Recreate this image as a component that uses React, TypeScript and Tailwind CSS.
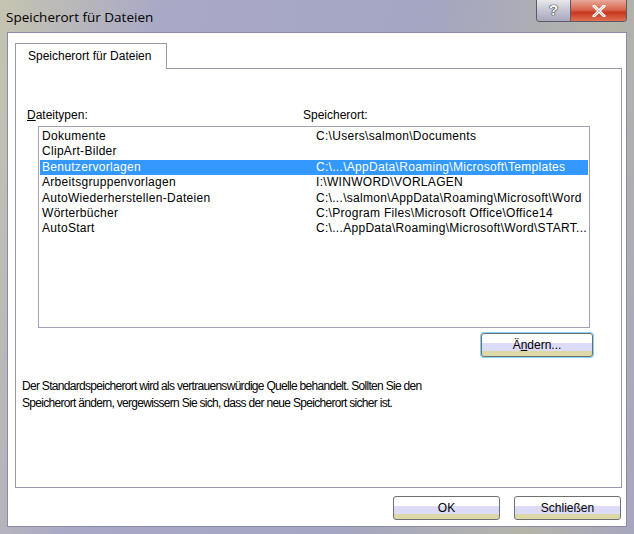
import React from "react";

const rows = [
  ["Dokumente", "C:\\Users\\salmon\\Documents"],
  ["ClipArt-Bilder", ""],
  ["Benutzervorlagen", "C:\\...\\AppData\\Roaming\\Microsoft\\Templates"],
  ["Arbeitsgruppenvorlagen", "I:\\WINWORD\\VORLAGEN"],
  ["AutoWiederherstellen-Dateien", "C:\\...\\salmon\\AppData\\Roaming\\Microsoft\\Word"],
  ["Wörterbücher", "C:\\Program Files\\Microsoft Office\\Office14"],
  ["AutoStart", "C:\\...AppData\\Roaming\\Microsoft\\Word\\START..."],
];

const btn =
  "flex items-center justify-center rounded-[3px] border border-[#707070] bg-[linear-gradient(to_bottom,#ffffff_0%,#ffffff_42%,#dcdcf8_42%,#dcdcf8_78%,#dcd8a8_78%,#dcd8a8_100%)] text-[12px] text-black";

export default function App() {
  return (
    <div
      className="w-[634px] h-[534px] flex flex-col bg-[linear-gradient(100deg,#c6c4b0_0%,#a9a9c6_22%,#a4a6c2_60%,#b4b4a8_85%,#a6a6c0_100%)] overflow-hidden"
      style={{ fontFamily: '"Liberation Sans", Arial, sans-serif' }}
    >
      {/* title bar */}
      <div className="h-[32px] flex items-start justify-between pl-[6px] pr-[7px]">
        <div
          className="mt-[8px] text-[13.5px] leading-[18px] text-black"
          style={{ fontFamily: '"Open Sans", "Noto Sans", sans-serif' }}
        >
          Speicherort für Dateien
        </div>
        <div className="flex h-[22px] rounded-b-[4px] border border-t-0 border-[#5a5a6a] overflow-hidden">
          <div className="w-[34px] flex items-center justify-center bg-[linear-gradient(to_bottom,#e8e8ec_0%,#c4c4d4_50%,#a8a8bc_100%)] border-r border-[#5a5a6a] text-[15px] font-bold text-white [text-shadow:0_0_1px_#222,0_0_1px_#222,0_0_1px_#222]">
            ?
          </div>
          <div className="w-[55px] flex items-center justify-center bg-[linear-gradient(to_bottom,#e8a898_0%,#d86850_45%,#c83820_60%,#e07050_100%)]">
            <svg width="14" height="12" viewBox="0 0 14 12">
              <path d="M2 1 L12 11 M12 1 L2 11" stroke="#ffffff" strokeWidth="3" strokeLinecap="square" />
              <path d="M2 1 L12 11 M12 1 L2 11" stroke="#7a2a20" strokeWidth="0.6" opacity="0.5" />
            </svg>
          </div>
        </div>
      </div>

      {/* client area */}
      <div className="mx-[7px] h-[495px] bg-white border border-[#8a8aa8] flex flex-col">
        <div className="pl-[7px] pr-[4px] pt-[9px]">
          {/* tab */}
          <div className="flex">
            <div className="w-[152px] h-[26px] border border-b-0 border-[#9898b0] bg-white pl-[12px] pt-[5px] text-[12px] leading-[14px] text-black relative top-[1px]">
              Speicherort für Dateien
            </div>
          </div>
          {/* panel */}
          <div className="h-[420px] border border-[#9898b0] flex flex-col">
            <div className="h-[39px]" />
            <div className="flex h-[18px] text-[12px] leading-[14px] text-black">
              <div className="w-[287px] pl-[11px]">
                <span className="underline">D</span>ateitypen:
              </div>
              <div>Speicherort:</div>
            </div>
            <div className="ml-[22px] w-[552px] h-[202px] border border-[#a0a0b8] px-[1px] pt-[2px] text-[12px] tracking-[0.3px] text-black">
              {rows.map(([a, b], i) => (
                <div
                  key={a}
                  className={
                    "h-[15.4px] flex leading-[15px] w-[548px] " +
                    (i === 2 ? "bg-[#3399ff] text-white" : "")
                  }
                >
                  <div className="w-[276px] pl-[2px] whitespace-nowrap">{a}</div>
                  <div className="whitespace-nowrap">{b}</div>
                </div>
              ))}
            </div>
            <div className="flex justify-end pr-[28px] pt-[5px]">
              <div className={btn + " w-[112px] h-[24px] border-[#3c7fb1] shadow-[0_0_0_1px_#7fd4f4]"}>
                Ä<span className="underline">n</span>dern...
              </div>
            </div>
            <div className="pl-[6px] pt-[21px] text-[12px] tracking-[-0.7px] leading-[17px] text-black">
              Der Standardspeicherort wird als vertrauenswürdige Quelle behandelt. Sollten Sie den
              <br />
              Speicherort ändern, vergewissern Sie sich, dass der neue Speicherort sicher ist.
            </div>
          </div>
        </div>
        <div className="flex justify-end gap-[14px] pr-[5px] pt-[8px]">
          <div className={btn + " w-[107px] h-[24px]"}>OK</div>
          <div className={btn + " w-[107px] h-[24px]"}>Schließen</div>
        </div>
      </div>
    </div>
  );
}
